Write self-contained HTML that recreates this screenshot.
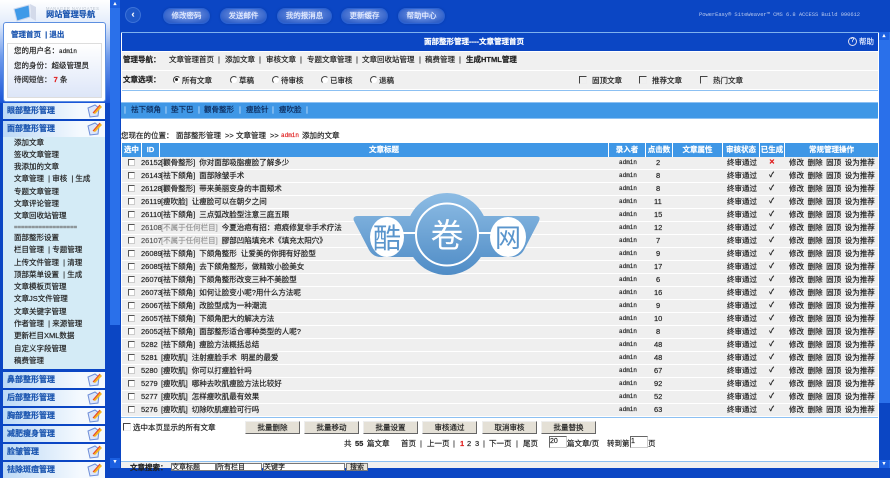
<!DOCTYPE html>
<html><head><meta charset="utf-8"><style>
html,body{margin:0;padding:0}
body{width:890px;height:468px;overflow:hidden;position:relative;background:#0b46c4;font:7.5px/10px "Liberation Sans","Noto Sans CJK SC",sans-serif;color:#222;-webkit-text-stroke:.18px}
div,span.a{position:absolute;white-space:nowrap}
.m{left:3px;width:102px;height:16px;background:linear-gradient(90deg,#bcd9f6,#f4f9fe 75%);font-weight:bold;color:#1c56b0;font-size:8px;line-height:16px;text-indent:4px}
.m svg{position:absolute;left:82px;top:0}
.s{left:14px}
.b{top:8px;height:14px;width:45px;border-radius:8px;background:radial-gradient(ellipse at 50% 40%,#86a4ec,#3060c8 78%);border:1px solid #2a62d4;box-shadow:0 0 2px #0c3aa0;color:#e6edff;text-align:center;line-height:14px}
.r{left:122px;width:756px;height:12px;background:#efefef;line-height:12px}
.r span{position:absolute;top:0}
.r .c{left:6px;top:2px;width:5px;height:5px;background:#fff;border:1px solid #ccc;border-top-color:#555;border-left-color:#555}
.r .i{left:19px}
.r .t{left:39px;word-spacing:2px}
.r .ad{left:497px;font-family:"Liberation Mono",monospace;font-size:6px}
.r .n1{left:534px}
.r .n2{left:532px}
.r .st{left:605px}
.r .ok{left:647px;font-weight:bold;font-size:7px}
.r .no{left:647px;color:#e02020;font-weight:bold;font-size:7px}
.r .op{left:667px;word-spacing:1.5px}
.h{top:143px;height:14px;background:#3f97e6;color:#fff;font-weight:bold;text-align:center;line-height:14px}
.btn{top:421px;width:53px;height:11px;line-height:11px;background:#e4e0d6;border:1px solid #eee;border-right-color:#666;border-bottom-color:#666;text-align:center}
.ck{width:6px;height:6px;background:transparent;border:1px solid #eee;border-top-color:#444;border-left-color:#444}
.rd{width:6px;height:6px;border-radius:50%;background:#fff;border:1px solid #eee;border-top-color:#444;border-left-color:#444}
.x{top:463px;height:6px;background:#fff;border:1px solid #777;line-height:8px;font-size:7px}
.gi{height:10px;background:#fff;border:1px solid #ccc;border-top-color:#666;border-left-color:#666;font-size:7px;line-height:10px;top:436px}
.u{left:0;width:100%}
</style></head><body>
<!-- sidebar -->
<div style="left:0;top:0;width:110px;height:103px;background:linear-gradient(#fff 0,#e4edfb 22%,#6f9bec 55%,#1a55d8 100%)"></div>
<div style="left:110px;top:0;width:10px;height:325px;background:#2a70ea"></div>
<div style="left:110px;top:0;width:10px;height:8px;background:#1b5fe0;color:#fff;text-align:center;font-size:5px;line-height:8px">▲</div>
<div style="left:110px;top:458px;width:10px;height:10px;background:#1b5fe0;color:#fff;text-align:center;font-size:5px;line-height:8px">▼</div>
<svg style="position:absolute;left:12px;top:2px" width="24" height="21"><path d="M2 7 L17 3 L18 15 L5 19Z" fill="#3f9ae8" stroke="#c9d6ee"/><path d="M18 2 L24 5 V19 L19 16Z" fill="#d3daea"/></svg>
<div style="left:46px;top:4px;color:#b8c0cc;font-size:4.2px;letter-spacing:.45px;-webkit-text-stroke:0">MANAGER NAVIGATES</div>
<div style="left:46px;top:10px;color:#1c56b0;font-weight:bold;font-size:8.2px;line-height:10px">网站管理导航</div>
<div style="left:3px;top:22px;width:101px;height:78px;background:#fff;border:1px solid #5d8fe0;border-radius:3px"></div>
<div style="left:11px;top:30px;color:#1c56b0;font-weight:bold">管理首页 &nbsp;| 退出</div>
<div style="left:7px;top:43px;width:93px;height:53px;background:linear-gradient(#fff,#dde6f8);border:1px solid #ddd"></div>
<div style="left:14px;top:46px">您的用户名：<span style="font-family:'Liberation Mono';font-size:6px">admin</span></div>
<div style="left:14px;top:61px">您的身份：超级管理员</div>
<div style="left:14px;top:75px">待阅短信： <b style="color:#e02020">7</b> 条</div>

<div class="m" style="top:103px">眼部整形管理<svg width="18" height="16"><use href="#ic"/></svg></div>
<div class="m" style="top:121px">面部整形管理<svg width="18" height="16"><defs><g id="ic"><path d="M3 5 L10 2 L14 5 L13 13 L5 14Z" fill="#dde6fa" stroke="#6f8fd8"/><path d="M8 10 L15 2 L17 4 L10 11Z" fill="#f5b51e"/><path d="M8 10 L15 2" stroke="#e8442a"/></g></defs><use href="#ic"/></svg></div>
<div style="left:3px;top:137px;width:102px;height:232px;background:#d4ebf6"></div>
<div class="s" style="top:138px">添加文章</div>
<div class="s" style="top:150px">签收文章管理</div>
<div class="s" style="top:162px">我添加的文章</div>
<div class="s" style="top:174px">文章管理 &nbsp;| 审核 &nbsp;| 生成</div>
<div class="s" style="top:187px">专题文章管理</div>
<div class="s" style="top:199px">文章评论管理</div>
<div class="s" style="top:211px">文章回收站管理</div>
<div class="s" style="top:223px;font-size:6px;color:#666">==================</div>
<div class="s" style="top:233px">面部整形设置</div>
<div class="s" style="top:245px">栏目管理 &nbsp;| 专题管理</div>
<div class="s" style="top:258px">上传文件管理 &nbsp;| 清理</div>
<div class="s" style="top:270px">顶部菜单设置 &nbsp;| 生成</div>
<div class="s" style="top:282px">文章模板页管理</div>
<div class="s" style="top:294px">文章JS文件管理</div>
<div class="s" style="top:307px">文章关键字管理</div>
<div class="s" style="top:319px">作者管理 &nbsp;| 来源管理</div>
<div class="s" style="top:331px">更新栏目XML数据</div>
<div class="s" style="top:344px">自定义字段管理</div>
<div class="s" style="top:356px">稿费管理</div>
<div class="m" style="top:372px">鼻部整形管理<svg width="18" height="16"><use href="#ic"/></svg></div>
<div class="m" style="top:390px">后部整形管理<svg width="18" height="16"><use href="#ic"/></svg></div>
<div class="m" style="top:408px">胸部整形管理<svg width="18" height="16"><use href="#ic"/></svg></div>
<div class="m" style="top:426px">减肥瘦身管理<svg width="18" height="16"><use href="#ic"/></svg></div>
<div class="m" style="top:444px">脸皱管理<svg width="18" height="16"><use href="#ic"/></svg></div>
<div class="m" style="top:462px">祛除斑痘管理<svg width="18" height="16"><use href="#ic"/></svg></div>

<!-- top bar -->
<div style="left:125px;top:7px;width:14px;height:14px;border-radius:50%;background:#1e58c8;border:1px solid #3d72d8;color:#fff;text-align:center;line-height:13px;font-weight:bold;font-size:9px">‹</div>
<div class="b" style="left:163px">修改密码</div>
<div class="b" style="left:220px">发送邮件</div>
<div class="b" style="left:277px;width:53px">我的报消息</div>
<div class="b" style="left:341px">更新缓存</div>
<div class="b" style="left:398px">帮助中心</div>
<div style="left:699px;top:10px;color:#b9c9ee;font-size:5.5px;font-family:'Liberation Mono',monospace;letter-spacing:-.08px;-webkit-text-stroke:0">PowerEasy® SiteWeaver™ CMS 6.8 ACCESS Build 090612</div>

<!-- main panel -->
<div style="left:121px;top:32px;width:758px;height:436px;background:#fff"></div>
<div style="left:121px;top:32px;width:758px;height:1px;background:#7fb2ee"></div>
<div style="left:122px;top:33px;width:756px;height:18px;background:#0b46c4"></div>
<div style="left:424px;top:37px;color:#fff;font-weight:bold">面部整形管理----文章管理首页</div>
<div style="left:848px;top:37px;width:7px;height:7px;border-radius:50%;border:1px solid #dde;color:#fff;font-size:6px;line-height:7px;text-align:center">?</div>
<div style="left:859px;top:37px;color:#dfe8ff">帮助</div>
<div style="left:122px;top:52px;width:756px;height:18px;background:#f0f0f0"></div>
<div style="left:123px;top:55px;font-weight:bold">管理导航：</div>
<div style="left:169px;top:55px">文章管理首页</div><div style="left:218px;top:55px">|</div>
<div style="left:225px;top:55px">添加文章</div><div style="left:259px;top:55px">|</div>
<div style="left:266px;top:55px">审核文章</div><div style="left:300px;top:55px">|</div>
<div style="left:307px;top:55px">专题文章管理</div><div style="left:356px;top:55px">|</div>
<div style="left:362px;top:55px">文章回收站管理</div><div style="left:419px;top:55px">|</div>
<div style="left:425px;top:55px">稿费管理</div><div style="left:459px;top:55px">|</div>
<div style="left:466px;top:55px;font-weight:bold">生成HTML管理</div>
<div style="left:122px;top:71px;width:756px;height:18px;background:#f0f0f0"></div>
<div style="left:122px;top:90px;width:756px;height:1px;background:#8cc0f2"></div>
<div style="left:123px;top:75px;font-weight:bold">文章选项：</div>
<div class="rd" style="left:173px;top:76px"></div><div style="left:182px;top:76px">所有文章</div>
<div style="left:175px;top:78px;width:3px;height:3px;border-radius:50%;background:#222"></div>
<div class="rd" style="left:230px;top:76px"></div><div style="left:239px;top:76px">草稿</div>
<div class="rd" style="left:272px;top:76px"></div><div style="left:281px;top:76px">待审核</div>
<div class="rd" style="left:321px;top:76px"></div><div style="left:330px;top:76px">已审核</div>
<div class="rd" style="left:370px;top:76px"></div><div style="left:379px;top:76px">退稿</div>
<div class="ck" style="left:579px;top:76px"></div><div style="left:592px;top:76px">固顶文章</div>
<div class="ck" style="left:639px;top:76px"></div><div style="left:652px;top:76px">推荐文章</div>
<div class="ck" style="left:700px;top:76px"></div><div style="left:713px;top:76px">热门文章</div>
<!-- tabs -->
<div style="left:121px;top:102px;width:757px;height:17px;background:#3f97e6;border-top:1px solid #8cc0f2;border-bottom:1px solid #8cc0f2;box-sizing:border-box"></div>
<div style="left:124px;top:105px;color:#cfe4fa">|</div><div style="left:131px;top:105px;color:#0c2a5a">祛下颌角</div>
<div style="left:165px;top:105px;color:#cfe4fa">|</div><div style="left:171px;top:105px;color:#0c2a5a">垫下巴</div>
<div style="left:198px;top:105px;color:#cfe4fa">|</div><div style="left:204px;top:105px;color:#0c2a5a">颧骨整形</div>
<div style="left:239px;top:105px;color:#cfe4fa">|</div><div style="left:246px;top:105px;color:#0c2a5a">瘦脸针</div>
<div style="left:272px;top:105px;color:#cfe4fa">|</div><div style="left:279px;top:105px;color:#0c2a5a">瘦吹脸</div>
<div style="left:306px;top:105px;color:#cfe4fa">|</div>
<div style="left:121px;top:131px">您现在的位置：</div><div style="left:176px;top:131px">面部整形管理</div><div style="left:225px;top:131px">&gt;&gt;</div><div style="left:236px;top:131px">文章管理</div><div style="left:270px;top:131px">&gt;&gt;</div><div style="left:281px;top:131px;color:#e02020;font-family:'Liberation Mono';font-size:6px">admin</div><div style="left:302px;top:131px">添加的文章</div>
<!-- table head -->
<div class="h" style="left:122px;width:19px">选中</div>
<div class="h" style="left:142px;width:17px">ID</div>
<div class="h" style="left:160px;width:448px">文章标题</div>
<div class="h" style="left:609px;width:36px">录入者</div>
<div class="h" style="left:646px;width:26px">点击数</div>
<div class="h" style="left:673px;width:49px">文章属性</div>
<div class="h" style="left:723px;width:36px">审核状态</div>
<div class="h" style="left:760px;width:24px">已生成</div>
<div class="h" style="left:785px;width:93px">常规管理操作</div>

<!-- rows -->
<div class="r" style="top:157px"><span class="c"></span><span class="i">26152</span><span class="t">[颧骨整形] 你对面部吸脂瘦脸了解多少</span><span class="ad">admin</span><span class="n1">2</span><span class="st">终审通过</span><span class="no">✕</span><span class="op">修改 删除 固顶 设为推荐</span></div>
<div class="r" style="top:170px"><span class="c"></span><span class="i">26143</span><span class="t">[祛下颌角] 面部除皱手术</span><span class="ad">admin</span><span class="n1">8</span><span class="st">终审通过</span><span class="ok">✓</span><span class="op">修改 删除 固顶 设为推荐</span></div>
<div class="r" style="top:183px"><span class="c"></span><span class="i">26128</span><span class="t">[颧骨整形] 带来美丽变身的丰面颊术</span><span class="ad">admin</span><span class="n1">8</span><span class="st">终审通过</span><span class="ok">✓</span><span class="op">修改 删除 固顶 设为推荐</span></div>
<div class="r" style="top:196px"><span class="c"></span><span class="i">26119</span><span class="t">[瘦吹脸] 让瘦脸可以在朝夕之间</span><span class="ad">admin</span><span class="n2">11</span><span class="st">终审通过</span><span class="ok">✓</span><span class="op">修改 删除 固顶 设为推荐</span></div>
<div class="r" style="top:209px"><span class="c"></span><span class="i">26110</span><span class="t">[祛下颌角] 三点弧改脸型注意三庭五眼</span><span class="ad">admin</span><span class="n2">15</span><span class="st">终审通过</span><span class="ok">✓</span><span class="op">修改 删除 固顶 设为推荐</span></div>
<div class="r" style="top:222px"><span class="c"></span><span class="i" style="color:#555">26108</span><span class="t"><span style="position:static;color:#999">[不属于任何栏目]</span> 今夏治疤有招：疤痕修复非手术疗法</span><span class="ad">admin</span><span class="n2">12</span><span class="st">终审通过</span><span class="ok">✓</span><span class="op">修改 删除 固顶 设为推荐</span></div>
<div class="r" style="top:235px"><span class="c"></span><span class="i" style="color:#555">26107</span><span class="t"><span style="position:static;color:#999">[不属于任何栏目]</span> 膠部凹陷填充术《填充太阳穴》</span><span class="ad">admin</span><span class="n1">7</span><span class="st">终审通过</span><span class="ok">✓</span><span class="op">修改 删除 固顶 设为推荐</span></div>
<div class="r" style="top:248px"><span class="c"></span><span class="i">26089</span><span class="t">[祛下颌角] 下颌角整形 让爱美的你拥有好脸型</span><span class="ad">admin</span><span class="n1">9</span><span class="st">终审通过</span><span class="ok">✓</span><span class="op">修改 删除 固顶 设为推荐</span></div>
<div class="r" style="top:261px"><span class="c"></span><span class="i">26085</span><span class="t">[祛下颌角] 去下颌角整形，做精致小脸美女</span><span class="ad">admin</span><span class="n2">17</span><span class="st">终审通过</span><span class="ok">✓</span><span class="op">修改 删除 固顶 设为推荐</span></div>
<div class="r" style="top:274px"><span class="c"></span><span class="i">26076</span><span class="t">[祛下颌角] 下颌角整形改变三种不美脸型</span><span class="ad">admin</span><span class="n1">6</span><span class="st">终审通过</span><span class="ok">✓</span><span class="op">修改 删除 固顶 设为推荐</span></div>
<div class="r" style="top:287px"><span class="c"></span><span class="i">26073</span><span class="t">[祛下颌角] 如何让脸变小呢?用什么方法呢</span><span class="ad">admin</span><span class="n2">16</span><span class="st">终审通过</span><span class="ok">✓</span><span class="op">修改 删除 固顶 设为推荐</span></div>
<div class="r" style="top:300px"><span class="c"></span><span class="i">26067</span><span class="t">[祛下颌角] 改脸型成为一种潮流</span><span class="ad">admin</span><span class="n1">9</span><span class="st">终审通过</span><span class="ok">✓</span><span class="op">修改 删除 固顶 设为推荐</span></div>
<div class="r" style="top:313px"><span class="c"></span><span class="i">26057</span><span class="t">[祛下颌角] 下颌角肥大的解决方法</span><span class="ad">admin</span><span class="n2">10</span><span class="st">终审通过</span><span class="ok">✓</span><span class="op">修改 删除 固顶 设为推荐</span></div>
<div class="r" style="top:326px"><span class="c"></span><span class="i">26052</span><span class="t">[祛下颌角] 面部整形适合哪种类型的人呢?</span><span class="ad">admin</span><span class="n1">8</span><span class="st">终审通过</span><span class="ok">✓</span><span class="op">修改 删除 固顶 设为推荐</span></div>
<div class="r" style="top:339px"><span class="c"></span><span class="i">5282</span><span class="t">[祛下颌角] 瘦脸方法概括总结</span><span class="ad">admin</span><span class="n2">48</span><span class="st">终审通过</span><span class="ok">✓</span><span class="op">修改 删除 固顶 设为推荐</span></div>
<div class="r" style="top:352px"><span class="c"></span><span class="i">5281</span><span class="t">[瘦吹肌] 注射瘦脸手术 明星的最爱</span><span class="ad">admin</span><span class="n2">48</span><span class="st">终审通过</span><span class="ok">✓</span><span class="op">修改 删除 固顶 设为推荐</span></div>
<div class="r" style="top:365px"><span class="c"></span><span class="i">5280</span><span class="t">[瘦吹肌] 你可以打瘦脸针吗</span><span class="ad">admin</span><span class="n2">67</span><span class="st">终审通过</span><span class="ok">✓</span><span class="op">修改 删除 固顶 设为推荐</span></div>
<div class="r" style="top:378px"><span class="c"></span><span class="i">5279</span><span class="t">[瘦吹肌] 哪种去吹肌瘦脸方法比较好</span><span class="ad">admin</span><span class="n2">92</span><span class="st">终审通过</span><span class="ok">✓</span><span class="op">修改 删除 固顶 设为推荐</span></div>
<div class="r" style="top:391px"><span class="c"></span><span class="i">5277</span><span class="t">[瘦吹肌] 怎样瘦吹肌最有效果</span><span class="ad">admin</span><span class="n2">52</span><span class="st">终审通过</span><span class="ok">✓</span><span class="op">修改 删除 固顶 设为推荐</span></div>
<div class="r" style="top:404px"><span class="c"></span><span class="i">5276</span><span class="t">[瘦吹肌] 切除吹肌瘦脸可行吗</span><span class="ad">admin</span><span class="n2">63</span><span class="st">终审通过</span><span class="ok">✓</span><span class="op">修改 删除 固顶 设为推荐</span></div>
<div style="left:121px;top:417px;width:757px;height:1px;background:#8cc0f2"></div>

<!-- watermark -->
<svg style="position:absolute;left:0;top:0;-webkit-text-stroke:0" width="890" height="468">
<defs><linearGradient id="g" gradientUnits="userSpaceOnUse" x1="0" y1="193" x2="0" y2="275"><stop offset="0" stop-color="#8dbce4"/><stop offset="1" stop-color="#4f8cc6"/></linearGradient></defs>
<path d="M358 216H536Q541 216 539 221L525 248Q521 257 512 257H381Q372 257 368 248L354 221Q352 216 358 216Z" fill="url(#g)"/>
<circle cx="447" cy="234" r="41" fill="url(#g)"/>
<ellipse cx="387" cy="237" rx="17" ry="20" fill="#fff"/><ellipse cx="508" cy="237" rx="18" ry="20" fill="#fff"/>
<circle cx="447" cy="234.5" r="31" fill="none" stroke="#fff" stroke-width="2"/>
<path d="M403 233H416M478 233H491" stroke="#fff" stroke-width="2"/>
<text x="387" y="248" text-anchor="middle" font-size="28" fill="#5a95cc" font-family="Noto Sans CJK SC">酷</text>
<text x="447" y="247" text-anchor="middle" font-size="33" fill="#fff" font-family="Noto Sans CJK SC">卷</text>
<text x="508" y="247" text-anchor="middle" font-size="26" fill="#5a95cc" font-family="Noto Sans CJK SC">网</text>
</svg>

<!-- bottom actions -->
<div class="ck" style="left:123px;top:423px"></div>
<div style="left:133px;top:423px">选中本页显示的所有文章</div>
<div class="btn" style="left:245px">批量删除</div>
<div class="btn" style="left:304px">批量移动</div>
<div class="btn" style="left:363px">批量设置</div>
<div class="btn" style="left:422px">审核通过</div>
<div class="btn" style="left:482px">取消审核</div>
<div class="btn" style="left:541px">批量替换</div>
<div style="left:344px;top:439px">共</div><div style="left:355px;top:439px;font-weight:bold">55</div><div style="left:367px;top:439px">篇文章</div>
<div style="left:401px;top:439px">首页</div><div style="left:420px;top:439px">|</div><div style="left:427px;top:439px">上一页</div><div style="left:453px;top:439px">|</div>
<div style="left:460px;top:439px;color:#e02020;font-weight:bold">1</div><div style="left:467px;top:439px">2</div><div style="left:475px;top:439px">3</div><div style="left:483px;top:439px">|</div>
<div style="left:489px;top:439px">下一页</div><div style="left:516px;top:439px">|</div><div style="left:523px;top:439px">尾页</div>
<div class="gi" style="left:549px;width:16px">20</div>
<div style="left:567px;top:439px">篇文章/页</div><div style="left:607px;top:439px">转到第</div>
<div class="gi" style="left:630px;width:16px">1</div>
<div style="left:648px;top:439px">页</div>
<div style="left:121px;top:461px;width:757px;height:7px;background:#f0f0f0;border-top:1px solid #8cc0f2;box-sizing:border-box"></div>
<div style="left:130px;top:463px;font-weight:bold">文章搜索：</div>
<div class="x" style="left:171px;width:43px">文章标题</div>
<div class="x" style="left:216px;width:44px">所有栏目</div>
<div class="x" style="left:263px;width:80px">关键字</div>
<div class="x" style="left:346px;width:20px;background:#e8e4da;text-align:center">搜索</div>

<!-- right scrollbar -->
<div style="left:879px;top:32px;width:11px;height:436px;background:#2a70ea"></div>
<div style="left:879px;top:32px;width:10px;height:8px;background:#1b5fe0;color:#fff;text-align:center;font-size:5px;line-height:8px">▲</div>
<div style="left:879px;top:403px;width:11px;height:57px;background:#0b46c4"></div>
<div style="left:879px;top:460px;width:10px;height:8px;background:#1b5fe0;color:#fff;text-align:center;font-size:5px;line-height:8px">▼</div>
</body></html>
